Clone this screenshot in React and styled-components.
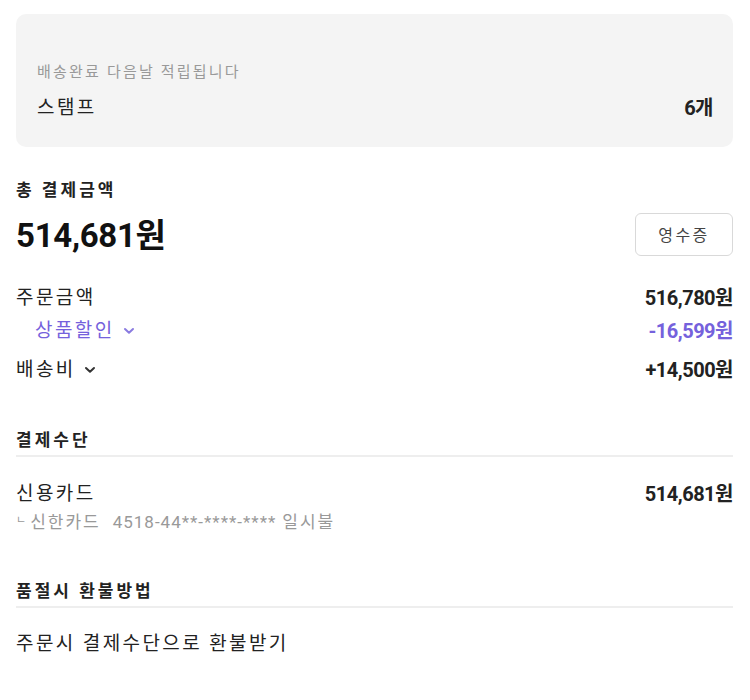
import React from "react";
import styled, { createGlobalStyle } from "styled-components";

const GlobalStyle = createGlobalStyle`
  body {
    margin: 0;
    background: #fff;
    font-family: Roboto, "Noto Sans CJK KR", sans-serif;
    color: #222;
  }
`;

const Page = styled.div`
  padding: 14px 17px 40px 16px;
`;

const StampBox = styled.div`
  background: #f4f4f4;
  border-radius: 10px;
  padding: 48px 20px 27px 21px;
`;

const Note = styled.div`
  font-size: 15px;
  line-height: 20px;
  letter-spacing: 2.2px;
  color: #999;
`;

const Row = styled.div`
  display: flex;
  justify-content: space-between;
  align-items: center;
  margin-top: ${(p) => p.$gap || 0}px;
  padding-left: ${(p) => p.$indent || 0}px;
`;

const Label = styled.span`
  display: inline-flex;
  align-items: center;
  gap: 8px;
  font-size: 19px;
  line-height: 24px;
  letter-spacing: 2.4px;
  color: ${(p) => p.$color || "#222"};
`;

const Value = styled.span`
  font-size: 20px;
  line-height: 24px;
  font-weight: 700;
  letter-spacing: -0.5px;
  color: ${(p) => p.$color || "#222"};
`;

const SectionTitle = styled.div`
  margin-top: ${(p) => p.$gap}px;
  font-size: 17px;
  line-height: 22px;
  font-weight: 700;
  letter-spacing: 3px;
  color: #222;
  padding-bottom: ${(p) => (p.$line ? 4 : 0)}px;
  border-bottom: ${(p) => (p.$line ? "2px solid #eee" : "none")};
`;

const BigAmount = styled.div`
  padding-top: 4px;
  font-size: 33px;
  line-height: 40px;
  font-weight: 700;
  letter-spacing: -0.3px;
  color: #111;
`;

const ReceiptButton = styled.button`
  width: 98px;
  height: 43px;
  border: 1px solid #d9d9d9;
  border-radius: 6px;
  background: #fff;
  font-family: inherit;
  font-size: 16px;
  letter-spacing: 2.5px;
  color: #444;
  cursor: pointer;
`;

const CardInfo = styled.div`
  margin-top: 4px;
  font-size: 17px;
  line-height: 22px;
  letter-spacing: 2px;
  color: #999;
  white-space: pre;
`;

const Corner = styled.span`
  font-size: 11px;
  vertical-align: 4px;
  letter-spacing: 0;
  margin-right: 4px;
`;

const CardNumber = styled.span`
  letter-spacing: 1px;
  margin: 0 6px 0 12px;
`;

const Text = styled.div`
  margin-top: ${(p) => p.$gap}px;
  font-size: 19px;
  line-height: 24px;
  letter-spacing: 2.4px;
  color: #222;
`;

const Chevron = ({ color }) => (
  <svg width="12" height="8" viewBox="0 0 12 8" fill="none">
    <path
      d="M2 2 L6 5.8 L10 2"
      stroke={color}
      strokeWidth="2"
      strokeLinecap="round"
      strokeLinejoin="round"
    />
  </svg>
);

const PURPLE = "#7561dc";

export default function App() {
  return (
    <>
      <GlobalStyle />
      <Page>
        <StampBox>
          <Note>배송완료 다음날 적립됩니다</Note>
          <Row $gap={14}>
            <Label>스탬프</Label>
            <Value>6개</Value>
          </Row>
        </StampBox>

        <SectionTitle $gap={32}>총 결제금액</SectionTitle>
        <Row $gap={11}>
          <BigAmount>514,681원</BigAmount>
          <ReceiptButton>영수증</ReceiptButton>
        </Row>
        <Row $gap={30}>
          <Label>주문금액</Label>
          <Value>516,780원</Value>
        </Row>
        <Row $gap={9} $indent={19}>
          <Label $color={PURPLE}>
            상품할인 <Chevron color="#8a7be0" />
          </Label>
          <Value $color={PURPLE}>-16,599원</Value>
        </Row>
        <Row $gap={15}>
          <Label>
            배송비 <Chevron color="#333" />
          </Label>
          <Value>+14,500원</Value>
        </Row>

        <SectionTitle $gap={47} $line>
          결제수단
        </SectionTitle>
        <Row $gap={25}>
          <Label>신용카드</Label>
          <Value>514,681원</Value>
        </Row>
        <CardInfo>
          <Corner>ㄴ</Corner>
          신한카드
          <CardNumber>4518-44**-****-****</CardNumber>
          일시불
        </CardInfo>

        <SectionTitle $gap={47} $line>
          품절시 환불방법
        </SectionTitle>
        <Text $gap={24}>주문시 결제수단으로 환불받기</Text>
      </Page>
    </>
  );
}
